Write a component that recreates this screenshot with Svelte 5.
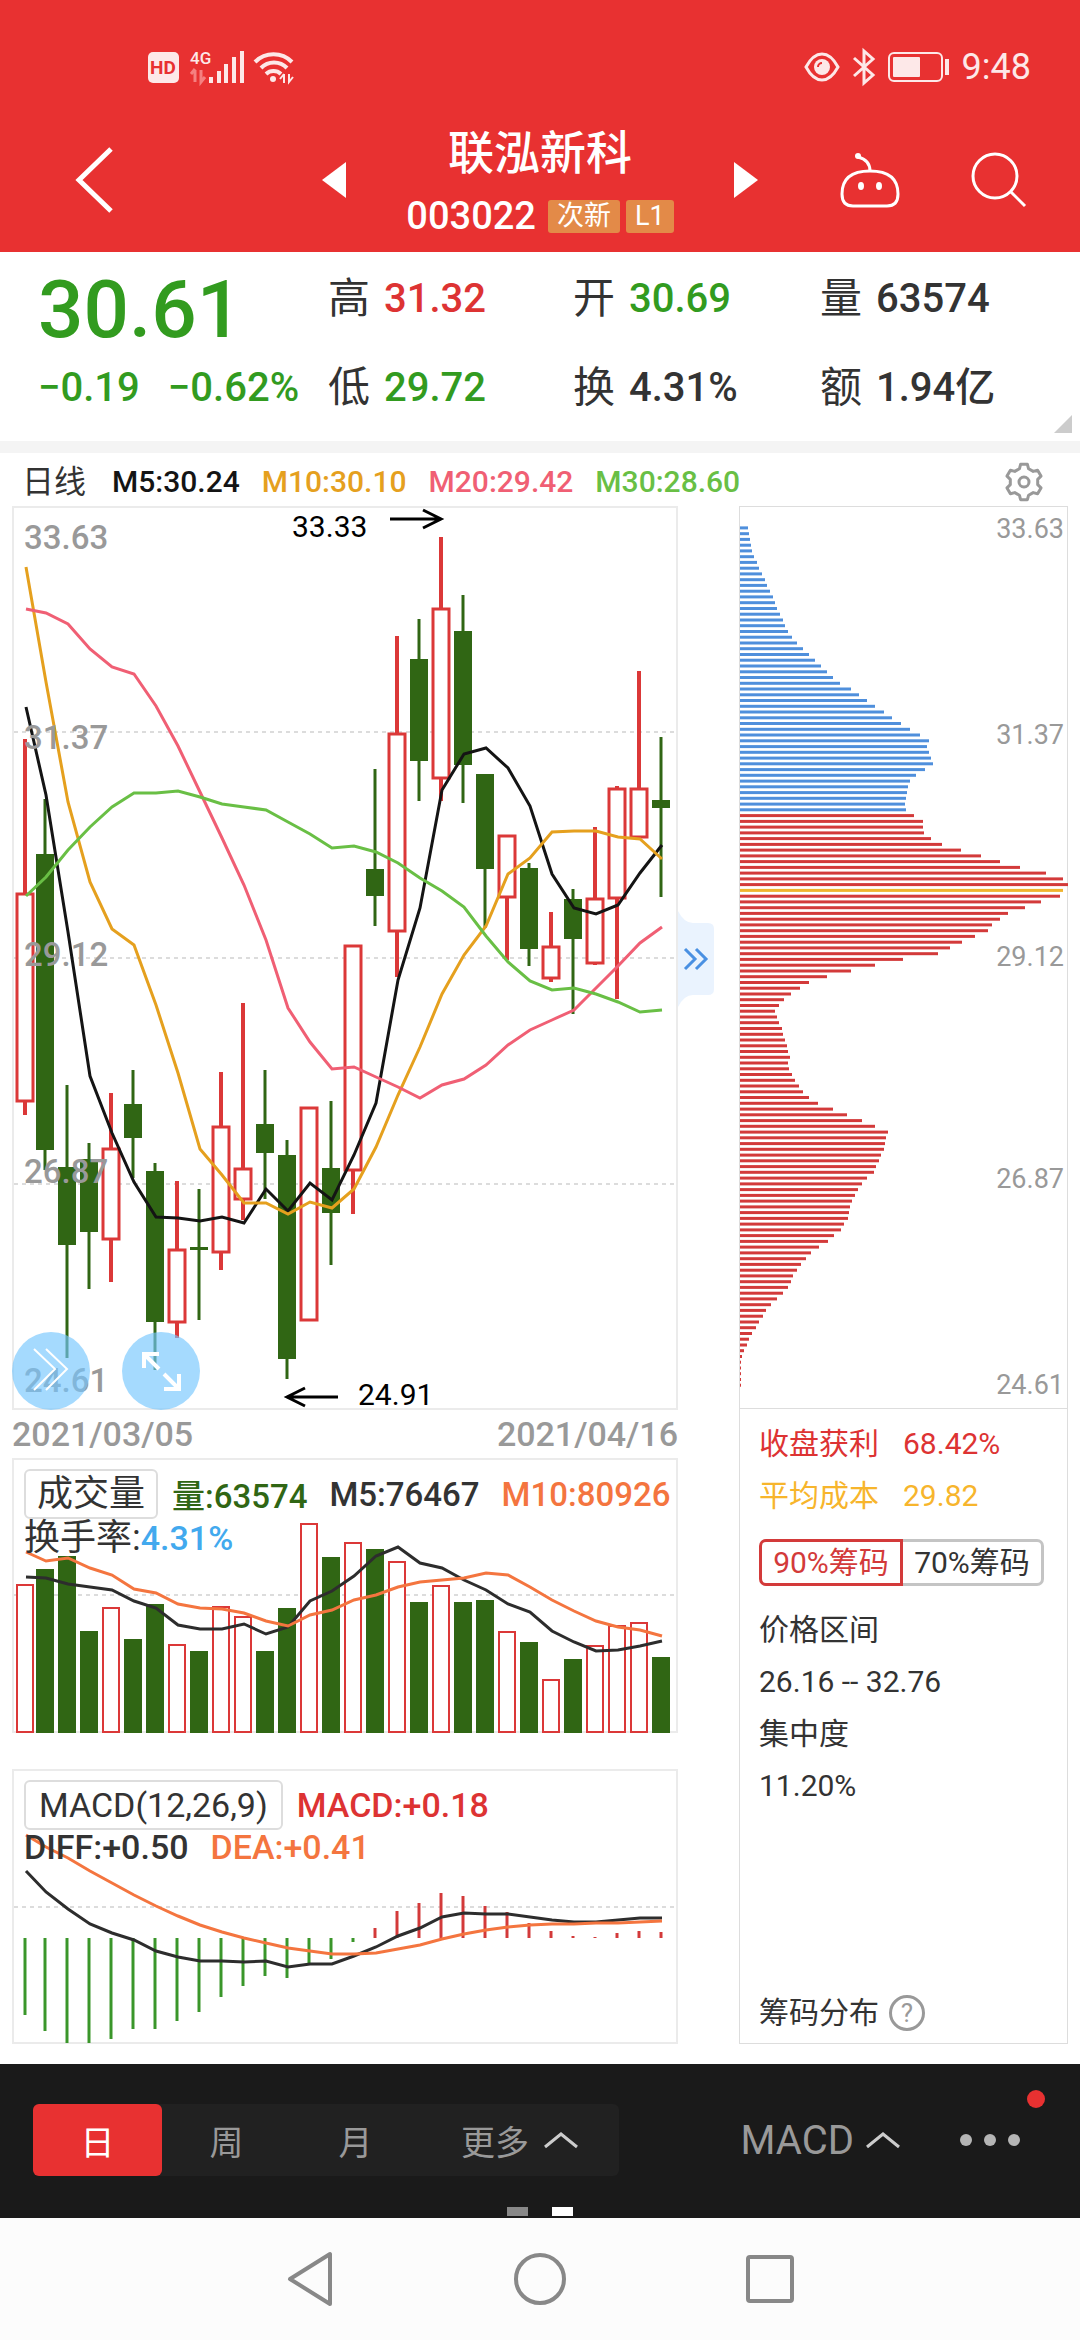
<script>
	// candles: [up, high, body top, body bottom, low], in chart units
	const candles = [
		[1, 233, 387, 596, 609],
		[0, 293, 348, 644, 664],
		[0, 579, 661, 739, 852],
		[0, 637, 653, 726, 783],
		[1, 587, 642, 734, 776],
		[0, 564, 598, 632, 672],
		[0, 657, 665, 816, 864],
		[1, 675, 743, 817, 832],
		[0, 683, 741, 744, 814],
		[1, 566, 620, 747, 764],
		[1, 497, 662, 694, 714],
		[0, 564, 618, 647, 693],
		[0, 634, 649, 853, 873],
		[1, 601, 601, 815, 815],
		[0, 595, 662, 707, 759],
		[1, 439, 439, 665, 708],
		[0, 263, 363, 390, 420],
		[1, 130, 227, 426, 471],
		[0, 113, 153, 255, 295],
		[1, 31, 102, 273, 295],
		[0, 89, 125, 259, 297],
		[0, 268, 268, 363, 422],
		[1, 329, 329, 392, 454],
		[0, 357, 362, 443, 460],
		[1, 406, 440, 473, 476],
		[0, 383, 393, 433, 508],
		[1, 321, 392, 458, 459],
		[1, 280, 282, 393, 493],
		[1, 165, 282, 332, 332],
		[0, 231, 294, 302, 391]
	];
	const ma5 = [201, 289, 426, 570, 627, 676, 711, 712, 715, 711, 717, 683, 705, 677, 694, 649, 597, 474, 402, 284, 248, 242, 262, 300, 368, 402, 408, 399, 367, 339];
	const ma10 = [61, 176, 296, 376, 423, 439, 499, 567, 643, 669, 697, 697, 708, 696, 702, 683, 641, 589, 541, 488, 449, 420, 368, 352, 326, 325, 325, 331, 333, 353];
	const ma20 = [103, 107, 118, 143, 161, 168, 200, 240, 286, 332, 379, 434, 502, 536, 563, 561, 571, 581, 592, 579, 573, 559, 539, 524, 514, 504, 482, 460, 437, 421];
	const ma30 = [390, 371, 344, 321, 301, 287, 287, 285, 291, 298, 301, 304, 316, 328, 342, 340, 346, 357, 372, 385, 401, 430, 456, 475, 484, 482, 488, 496, 506, 504];

	const volume = [126, 111, 98, 173, 149, 181, 146, 186, 193, 148, 158, 193, 150, 65, 99, 84, 91, 103, 144, 127, 144, 142, 173, 184, 221, 201, 187, 167, 164, 199];
	const vol5 = [119, 120, 126, 129, 132, 143, 150, 167, 171, 171, 166, 176, 169, 143, 133, 118, 98, 89, 105, 110, 122, 132, 146, 154, 173, 184, 193, 192, 188, 183];
	const vol10 = [94, 103, 100, 110, 117, 131, 135, 146, 150, 151, 155, 163, 168, 157, 152, 142, 137, 129, 124, 122, 120, 115, 117, 129, 142, 153, 163, 169, 172, 178];

	const macdZero = 169;
	const macd = [246, 262, 274, 274, 270, 260, 260, 252, 243, 228, 217, 207, 209, 194, 190, 173, 159, 142, 134, 124, 127, 137, 143, 154, 162, 167, 168, 164, 162, 163];
	const diff = [102, 123, 140, 155, 164, 171, 182, 188, 192, 192, 193, 192, 198, 195, 195, 187, 178, 167, 159, 148, 144, 145, 145, 148, 151, 153, 153, 151, 149, 149];
	const dea = [66, 78, 89, 102, 114, 126, 137, 147, 156, 163, 169, 174, 179, 182, 185, 185, 184, 180, 176, 170, 165, 161, 158, 156, 155, 155, 154, 154, 153, 152];

	// chip distribution, top price first
	const chips = [
		8, 9, 10, 11, 12, 14, 17, 19, 22, 25, 27, 30, 33, 35, 37, 40, 43, 45, 48, 52, 57, 63, 69, 75, 81,
		87, 93, 100, 111, 119, 127, 135, 144, 152, 161, 170, 180, 189, 187, 189, 191, 193, 185, 176, 170, 168, 167, 166, 165, 166,
		174, 183, 183, 184, 191, 202, 221, 241, 260, 280, 306, 323, 328, 323, 320, 301, 285, 268, 260, 252, 248, 235, 222, 210, 198,
		163, 135, 111, 87, 69, 60, 51, 44, 39, 35, 37, 39, 42, 43, 45, 47, 48, 50, 48, 49, 52, 55, 59, 63, 69,
		78, 93, 107, 122, 135, 148, 146, 145, 144, 141, 139, 136, 134, 127, 122, 118, 115, 112, 110, 109, 108, 104, 101, 94, 88,
		79, 71, 66, 61, 57, 53, 51, 48, 43, 37, 31, 26, 23, 19, 16, 12, 9, 7, 4, 2, 1, 1, 1, 1, 1
	];
	const lossCount = 50;
	const avgIndex = 63;

	const quotes = [
		['高', '31.32', 'red'],
		['开', '30.69', 'green'],
		['量', '63574', ''],
		['低', '29.72', 'green'],
		['换', '4.31%', ''],
		['额', '1.94亿', '']
	];
	const priceLabels = [
		['33.63', 43],
		['31.37', 243],
		['29.12', 460],
		['26.87', 677],
		['24.61', 886]
	];
	const chipLabels = [
		['33.63', 31],
		['31.37', 237],
		['29.12', 459],
		['26.87', 681],
		['24.61', 887]
	];

	let period = '日';
	let range = 90;

	const cx = (i) => (i === 0 ? 13 : 11 + 22 * i);
	const line = (values) => values.map((y, i) => `${cx(i) + 1},${y}`).join(' ');
	const chipColor = (i) => (i === avgIndex ? '#f0b42e' : i < lossCount ? '#4f8fdc' : '#d33a3a');

	function gearPath() {
		const pts = [];
		for (let k = 0; k < 6; k++) {
			const mid = -90 + 60 * k;
			for (const [r, d] of [[14, -19], [18, -11], [18, 11], [14, 19]]) {
				const a = ((mid + d) * Math.PI) / 180;
				pts.push(`${(20 + r * Math.cos(a)).toFixed(1)} ${(20 + r * Math.sin(a)).toFixed(1)}`);
			}
		}
		return 'M' + pts.join('L') + 'Z';
	}
</script>

<div class="app">
	<header>
		<div class="status">
			<svg width="146" height="36" viewBox="0 0 146 36">
				<rect x="0" y="3" width="31" height="31" rx="5" fill="#fde8e8" />
				<text x="15" y="25" class="hd">HD</text>
				<text x="42" y="15" class="net">4G</text>
				<path d="M47 21v12M47 20l-4 5M53 21v12l4-5" stroke="#f58080" stroke-width="3" fill="none" />
				<path d="M63 28v6M71 22v12M78 15v19M86 8v26M94 2v32" stroke="#fde8e8" stroke-width="4" />
				<g fill="none" stroke="#fde8e8" stroke-width="4">
					<path d="M107 13a26 26 0 0 1 37 0" />
					<path d="M113 19a18 18 0 0 1 26 0" />
					<path d="M118 25a11 11 0 0 1 15 0" />
					<path d="M136 25v9M136 25l-4 5M141 25v8l4-5" stroke-width="2" />
				</g>
				<circle cx="125" cy="30" r="3" fill="#fde8e8" />
			</svg>
			<div class="status-right">
				<svg width="36" height="32" viewBox="0 0 36 32" fill="none" stroke="#fde8e8" stroke-width="3">
					<path d="M2 16Q9 3 18 3t16 13Q27 29 18 29T2 16Z" />
					<circle cx="18" cy="16" r="8" fill="#fde8e8" stroke="none" />
					<path d="M14 16a4 4 0 0 1 4-4" stroke="#e83131" stroke-width="2" />
				</svg>
				<svg width="24" height="36" viewBox="0 0 24 36" fill="none" stroke="#fde8e8" stroke-width="3">
					<path d="M2 9l19 17-9 8V2l9 8L2 27" />
				</svg>
				<svg width="62" height="32" viewBox="0 0 62 32">
					<rect x="1" y="2" width="53" height="28" rx="5" fill="none" stroke="#fde8e8" stroke-width="2" />
					<rect x="5" y="6" width="27" height="20" rx="1" fill="#fde8e8" />
					<path d="M59 8v16" stroke="#fde8e8" stroke-width="4" />
				</svg>
				<span>9:48</span>
			</div>
		</div>
		<div class="titlebar">
			<div class="side left">
				<button aria-label="back">
					<svg width="38" height="66" viewBox="0 0 38 66"><path d="M35 2L3 33l32 31" fill="none" stroke="#fff" stroke-width="5" /></svg>
				</button>
				<button aria-label="previous">
					<svg width="24" height="36" viewBox="0 0 24 36"><path d="M24 0v36L0 18z" fill="#fff" /></svg>
				</button>
			</div>
			<div class="title">
				<h1>联泓新科</h1>
				<div class="code">
					<span>003022</span>
					<em>次新</em>
					<em>L1</em>
				</div>
			</div>
			<div class="side right">
				<button class="next" aria-label="next">
					<svg width="24" height="36" viewBox="0 0 24 36"><path d="M0 0v36l24-18z" fill="#fff" /></svg>
				</button>
				<button aria-label="assistant">
					<svg width="60" height="56" viewBox="0 0 60 56" fill="none" stroke="#fff" stroke-width="3">
						<path d="M30 19C11 19 2 27 2 42q0 12 11 12h34q11 0 11-12C58 27 49 19 30 19Z" />
						<path d="M18 5q12 3 12 14" />
						<circle cx="18" cy="4" r="3" fill="#fff" stroke="none" />
						<ellipse cx="21" cy="34" rx="3" ry="4" fill="#fff" stroke="none" />
						<ellipse cx="39" cy="34" rx="3" ry="4" fill="#fff" stroke="none" />
					</svg>
				</button>
				<button aria-label="search">
					<svg width="56" height="56" viewBox="0 0 56 56" fill="none" stroke="#fff" stroke-width="3">
						<circle cx="24" cy="24" r="22" />
						<path d="M40 40l14 14" />
					</svg>
				</button>
			</div>
		</div>
	</header>

	<section class="quote">
		<div class="price">30.61</div>
		{#each quotes.slice(0, 3) as [label, value, color]}
			<div class="cell"><span>{label}</span><b class={color}>{value}</b></div>
		{/each}
		<div class="change"><span>−0.19</span><span>−0.62%</span></div>
		{#each quotes.slice(3) as [label, value, color]}
			<div class="cell"><span>{label}</span><b class={color}>{value}</b></div>
		{/each}
		<i class="corner"></i>
	</section>

	<div class="legend">
		<span class="kind">日线</span>
		<span class="m5">M5:30.24</span>
		<span class="m10">M10:30.10</span>
		<span class="m20">M20:29.42</span>
		<span class="m30">M30:28.60</span>
		<button class="gear" aria-label="settings">
			<svg width="40" height="40" viewBox="0 0 40 40" fill="none" stroke="#999" stroke-width="3" stroke-linejoin="round">
				<path d={gearPath()} />
				<circle cx="20" cy="20" r="5" />
			</svg>
		</button>
	</div>

	<main>
		<div class="charts">
			<div class="chart">
				<svg viewBox="0 0 666 904">
					<rect x="1" y="1" width="664" height="902" class="frame" />
					{#each [226, 452, 678] as y}
						<path d="M2 {y}H664" class="grid" />
					{/each}
					{#each candles as [up, high, top, bottom, low], i}
						{#if up}
							<path d="M{cx(i)} {high}V{top}M{cx(i)} {bottom}V{low}" stroke="#db3838" stroke-width="4" />
							<rect x={cx(i) - 8} y={top + 1} width="16" height={bottom - top - 2} fill="#fff" stroke="#db3838" stroke-width="3" />
						{:else}
							<path d="M{cx(i)} {high}V{low}" stroke="#306614" stroke-width="3" />
							<rect x={cx(i) - 9} y={top} width="18" height={bottom - top} fill="#306614" />
						{/if}
					{/each}
					<g fill="none" stroke-width="3">
						<polyline points={line(ma5)} stroke="#141414" />
						<polyline points={line(ma10)} stroke="#e5a01e" />
						<polyline points={line(ma20)} stroke="#f05f74" />
						<polyline points={line(ma30)} stroke="#69bf45" />
					</g>
					{#each priceLabels as [text, y]}
						<text x="12" {y} class="axis">{text}</text>
					{/each}
					<text x="280" y="31" class="mark">33.33</text>
					<text x="346" y="899" class="mark">24.91</text>
					<path d="M378 13h50M411 4l18 9-18 9M326 891h-50M293 882l-18 9 18 9" fill="none" stroke="#000" stroke-width="3" />
				</svg>
				<div class="floating">
					<button aria-label="scroll">
						<svg width="78" height="78" viewBox="0 0 78 78" fill="none" stroke="#fff" stroke-width="2">
							<path d="M22 17l21 20-21 21M34 17l21 20-21 21" />
						</svg>
					</button>
					<button aria-label="fullscreen">
						<svg width="78" height="78" viewBox="0 0 78 78" fill="none" stroke="#fff" stroke-width="4">
							<path d="M22 36V22h15M22 22l15 15M57 42v15H42M57 57L42 42" />
						</svg>
					</button>
				</div>
			</div>
			<div class="dates"><span>2021/03/05</span><span>2021/04/16</span></div>

			<div class="chart volume">
				<svg viewBox="0 0 666 275">
					<rect x="1" y="1" width="664" height="273" class="frame" />
					<path d="M2 137H664" class="grid" />
					{#each volume as y, i}
						{#if candles[i][0]}
							<rect x={cx(i) - 8} y={y + 1} width="16" height={273 - y} fill="#fff" stroke="#db3838" stroke-width="2" />
						{:else}
							<rect x={cx(i) - 9} {y} width="18" height={275 - y} fill="#306614" />
						{/if}
					{/each}
					<g fill="none" stroke-width="3">
						<polyline points={line(vol5)} stroke="#2d2d2d" />
						<polyline points={line(vol10)} stroke="#f4753f" />
					</g>
				</svg>
				<div class="caption">
					<div class="row">
						<button class="picker">成交量</button>
						<span class="dark-green">量:63574</span>
						<span>M5:76467</span>
						<span class="orange">M10:80926</span>
					</div>
					<div class="row second"><span>换手率:<b class="blue">4.31%</b></span></div>
				</div>
			</div>

			<div class="chart macd">
				<svg viewBox="0 0 666 275">
					<rect x="1" y="1" width="664" height="273" class="frame" />
					<path d="M2 138H664" class="grid" />
					{#each macd as y, i}
						<path d="M{cx(i)} {macdZero}V{y}" stroke={y > macdZero ? '#3a962a' : '#d33a3a'} stroke-width="3" />
					{/each}
					<g fill="none" stroke-width="3">
						<polyline points={line(diff)} stroke="#2d2d2d" />
						<polyline points={line(dea)} stroke="#f4753f" />
					</g>
				</svg>
				<div class="caption">
					<div class="row">
						<button class="picker">MACD(12,26,9)</button>
						<span class="red">MACD:+0.18</span>
					</div>
					<div class="row second">
						<span>DIFF:+0.50</span>
						<span class="orange">DEA:+0.41</span>
					</div>
				</div>
			</div>
		</div>

		<div class="gutter">
			<button aria-label="collapse chips">
				<svg width="36" height="96" viewBox="0 0 36 96" fill="none">
					<path d="M0 0q6 12 15 12h15q6 0 6 6v60q0 6-6 6H15Q6 84 0 96Z" fill="#eaf3fe" />
					<path d="M7 38l10 10-10 10M18 38l10 10-10 10" stroke="#4a90e2" stroke-width="3" />
				</svg>
			</button>
		</div>

		<aside>
			<svg viewBox="0 0 327 901">
				{#each chips as w, i}
					<rect x="0" y={(19.4 + i * 5.754).toFixed(1)} width={w} height="3" fill={chipColor(i)} />
				{/each}
				{#each chipLabels as [text, y]}
					<text x="324" {y} class="chip-label">{text}</text>
				{/each}
			</svg>
			<div class="info">
				<p class="red"><span>收盘获利</span><span>68.42%</span></p>
				<p class="gold"><span>平均成本</span><span>29.82</span></p>
				<div class="ranges">
					<button class:on={range === 90} on:click={() => (range = 90)}>90%筹码</button>
					<button class:on={range === 70} on:click={() => (range = 70)}>70%筹码</button>
				</div>
				<p>价格区间</p>
				<p>26.16 -- 32.76</p>
				<p>集中度</p>
				<p>11.20%</p>
				<div class="help">筹码分布 <button aria-label="help">?</button></div>
			</div>
		</aside>
	</main>

	<nav class="toolbar">
		<div class="periods">
			{#each ['日', '周', '月'] as p}
				<button class:active={period === p} on:click={() => (period = p)}>{p}</button>
			{/each}
			<button class="more">
				更多
				<svg width="34" height="18" viewBox="0 0 34 18"><path d="M1 16L17 3l16 13" fill="none" stroke="#ccc" stroke-width="3" /></svg>
			</button>
		</div>
		<button class="indicator">
			MACD
			<svg width="34" height="18" viewBox="0 0 34 18"><path d="M1 16L17 3l16 13" fill="none" stroke="#ccc" stroke-width="3" /></svg>
		</button>
		<button class="dots" aria-label="menu">
			<svg width="60" height="12" viewBox="0 0 60 12" fill="#b5b5b5">
				<circle cx="6" cy="6" r="6" /><circle cx="30" cy="6" r="6" /><circle cx="54" cy="6" r="6" />
			</svg>
			<i></i>
		</button>
		<div class="pages"><i></i><i class="current"></i></div>
	</nav>

	<div class="system">
		<svg width="48" height="56" viewBox="0 0 48 56"><path d="M44 3v50L4 28Z" /></svg>
		<svg width="56" height="56" viewBox="0 0 56 56"><circle cx="28" cy="28" r="24" /></svg>
		<svg width="48" height="56" viewBox="0 0 48 56"><rect x="2" y="6" width="44" height="44" rx="2" /></svg>
	</div>
</div>

<style>
	:global(body) {
		margin: 0;
		background: #fff;
	}
	.app {
		font-family: Roboto, 'Noto Sans CJK SC', sans-serif;
		color: #333;
	}
	.app svg {
		display: block;
		overflow: visible;
	}
	button {
		padding: 0;
		border: 0;
		background: none;
		color: inherit;
		font: inherit;
	}
	.red {
		color: #dd3333;
	}
	.green {
		color: #329b1f;
	}

	/* header */
	header {
		background: #e83131;
		color: #fff;
	}
	.status {
		display: flex;
		justify-content: space-between;
		align-items: center;
		height: 108px;
		padding: 26px 49px 0 148px;
		box-sizing: border-box;
	}
	.hd {
		font-size: 19px;
		font-weight: 700;
		fill: #e83131;
		text-anchor: middle;
	}
	.net {
		font-size: 17px;
		font-weight: 500;
		fill: #fde8e8;
	}
	.status-right {
		display: flex;
		align-items: center;
		gap: 12px;
		font-size: 36px;
		color: #fde8e8;
	}
	.titlebar {
		display: grid;
		grid-template-columns: 1fr auto 1fr;
		height: 144px;
	}
	.side {
		display: flex;
		justify-content: space-between;
		align-items: center;
	}
	.left {
		padding: 0 60px 0 76px;
	}
	.right {
		gap: 71px;
		padding: 0 53px 0 60px;
	}
	.next {
		margin-right: auto;
	}
	.title {
		display: flex;
		flex-direction: column;
		align-items: center;
		justify-content: center;
		gap: 20px;
	}
	h1 {
		margin: 0;
		font-size: 46px;
		line-height: 52px;
		font-weight: 500;
	}
	.code {
		display: flex;
		align-items: center;
		gap: 6px;
		height: 34px;
		font-size: 38px;
		font-weight: 500;
	}
	.code span {
		margin-right: 6px;
	}
	.code em {
		padding: 0 9px;
		border-radius: 3px;
		background: #e38a48;
		font-size: 27px;
		line-height: 33px;
		font-style: normal;
		font-weight: 400;
	}

	/* quote */
	.quote {
		position: relative;
		display: grid;
		grid-template-columns: 290fr 245fr 247fr 260fr;
		grid-template-rows: 84px 72px;
		padding: 16px 0 17px 38px;
		border-bottom: 12px solid #f4f4f4;
	}
	.price {
		font-size: 80px;
		line-height: 84px;
		font-weight: 500;
		color: #329b1f;
	}
	.change {
		display: flex;
		gap: 28px;
		font-size: 40px;
		line-height: 72px;
		font-weight: 500;
		color: #329b1f;
	}
	.cell {
		display: flex;
		gap: 14px;
		font-size: 42px;
		line-height: 62px;
	}
	.change ~ .cell {
		line-height: 72px;
	}
	.cell b {
		font-weight: 500;
		font-size: 40px;
	}
	.corner {
		position: absolute;
		right: 8px;
		bottom: 8px;
		border-left: 18px solid transparent;
		border-bottom: 18px solid #ccc;
	}

	.legend {
		display: flex;
		align-items: center;
		gap: 22px;
		box-sizing: border-box;
		height: 53px;
		padding: 4px 36px 0 22px;
		font-size: 30px;
		font-weight: 500;
	}
	.kind {
		margin-right: 4px;
		font-size: 32px;
		line-height: 40px;
		font-weight: 400;
	}
	.m5 {
		color: #141414;
	}
	.m10 {
		color: #e5a01e;
	}
	.m20 {
		color: #f05f74;
	}
	.m30 {
		color: #69bf45;
	}
	.gear {
		margin-left: auto;
	}

	/* charts */
	main {
		display: grid;
		grid-template-columns: minmax(0, 666fr) 61px minmax(0, 329fr);
		padding: 0 12px 20px;
	}
	.chart {
		position: relative;
	}
	.frame {
		fill: none;
		stroke: #ebebeb;
		stroke-width: 2;
	}
	.grid {
		stroke: #dcdcdc;
		stroke-width: 2;
		stroke-dasharray: 4 4;
	}
	.axis {
		font-size: 33px;
		font-weight: 500;
		fill: #999;
	}
	.mark {
		font-size: 30px;
		fill: #000;
	}
	.floating {
		position: absolute;
		left: 0;
		bottom: 0;
		display: flex;
		gap: 32px;
	}
	.floating button {
		border-radius: 50%;
		background: rgba(116, 198, 254, 0.65);
	}
	.dates {
		display: flex;
		justify-content: space-between;
		font-size: 34px;
		line-height: 48px;
		font-weight: 500;
		color: #999;
	}
	.volume {
		margin-bottom: 36px;
	}
	.caption {
		position: absolute;
		top: 11px;
		left: 12px;
		font-weight: 500;
		font-size: 33px;
	}
	.macd .caption {
		font-size: 34px;
	}
	.row {
		display: flex;
		align-items: center;
		gap: 22px;
		height: 50px;
		white-space: nowrap;
	}
	.row.second {
		height: 34px;
	}
	.volume .second {
		height: 30px;
		font-size: 36px;
		font-weight: 400;
	}
	.row .picker {
		height: 50px;
		margin-right: -8px;
		padding: 0 11px;
		border: 2px solid #ddd;
		border-radius: 6px;
		font-size: 36px;
		line-height: 44px;
		font-weight: 400;
	}
	.macd .row .picker {
		padding: 0 13px;
		font-size: 34px;
	}
	.dark-green {
		color: #306614;
	}
	.orange {
		color: #f4753f;
	}
	.blue {
		color: #42a9ee;
		font-size: 34px;
		font-weight: 500;
	}

	.gutter button {
		margin-top: 405px;
	}

	/* chip distribution */
	aside {
		display: flex;
		flex-direction: column;
		border: 1px solid #ddd;
	}
	.chip-label {
		font-size: 27px;
		fill: #999;
		text-anchor: end;
	}
	.info {
		flex: 1;
		display: flex;
		flex-direction: column;
		padding: 9px 18px 12px 19px;
		border-top: 1px solid #ddd;
		font-size: 30px;
		line-height: 52px;
	}
	.info p {
		display: flex;
		gap: 24px;
		margin: 0;
	}
	.gold {
		color: #f7b52c;
	}
	.ranges {
		display: flex;
		margin: 17px 5px 18px 0;
	}
	.ranges button {
		flex: 1;
		height: 47px;
		line-height: 40px;
		border: 3px solid #c4c4c4;
		white-space: nowrap;
	}
	.ranges button:first-child {
		border-radius: 7px 0 0 7px;
	}
	.ranges button:last-child {
		border-left-width: 0;
		border-radius: 0 7px 7px 0;
	}
	.ranges .on {
		border-color: #d33a3a;
		color: #d33a3a;
	}
	.help {
		display: flex;
		align-items: center;
		gap: 10px;
		margin-top: auto;
		line-height: 36px;
	}
	.help button {
		width: 36px;
		height: 36px;
		border: 3px solid #999;
		border-radius: 50%;
		font-size: 26px;
		line-height: 30px;
		color: #999;
	}

	/* bottom */
	.toolbar {
		position: relative;
		display: flex;
		align-items: center;
		height: 154px;
		box-sizing: border-box;
		padding: 0 60px 2px 33px;
		background: #1a1a1a;
		color: #999;
		font-size: 34px;
	}
	.periods {
		display: flex;
		border-radius: 6px;
		background: #212121;
	}
	.periods button {
		width: 129px;
		height: 72px;
		border-radius: 6px;
	}
	.periods .active {
		background: #e83131;
		color: #fff;
	}
	.periods .more {
		display: flex;
		align-items: center;
		justify-content: center;
		gap: 15px;
		width: 199px;
	}
	.indicator {
		display: flex;
		align-items: center;
		gap: 12px;
		margin-left: auto;
		margin-right: 60px;
		font-size: 40px;
	}
	.dots {
		position: relative;
		height: 72px;
	}
	.dots i {
		position: absolute;
		top: -14px;
		right: -25px;
		width: 18px;
		height: 18px;
		border-radius: 50%;
		background: #e83131;
	}
	.pages {
		position: absolute;
		left: 0;
		right: 0;
		bottom: 2px;
		display: flex;
		justify-content: center;
		gap: 24px;
	}
	.pages i {
		width: 21px;
		height: 9px;
		background: #888;
	}
	.pages .current {
		background: #fff;
	}
	.system {
		display: flex;
		justify-content: center;
		align-items: center;
		gap: 178px;
		height: 122px;
		background: #fcfcfc;
	}
	.system svg {
		fill: none;
		stroke: #888;
		stroke-width: 4;
		stroke-linejoin: round;
	}
</style>
